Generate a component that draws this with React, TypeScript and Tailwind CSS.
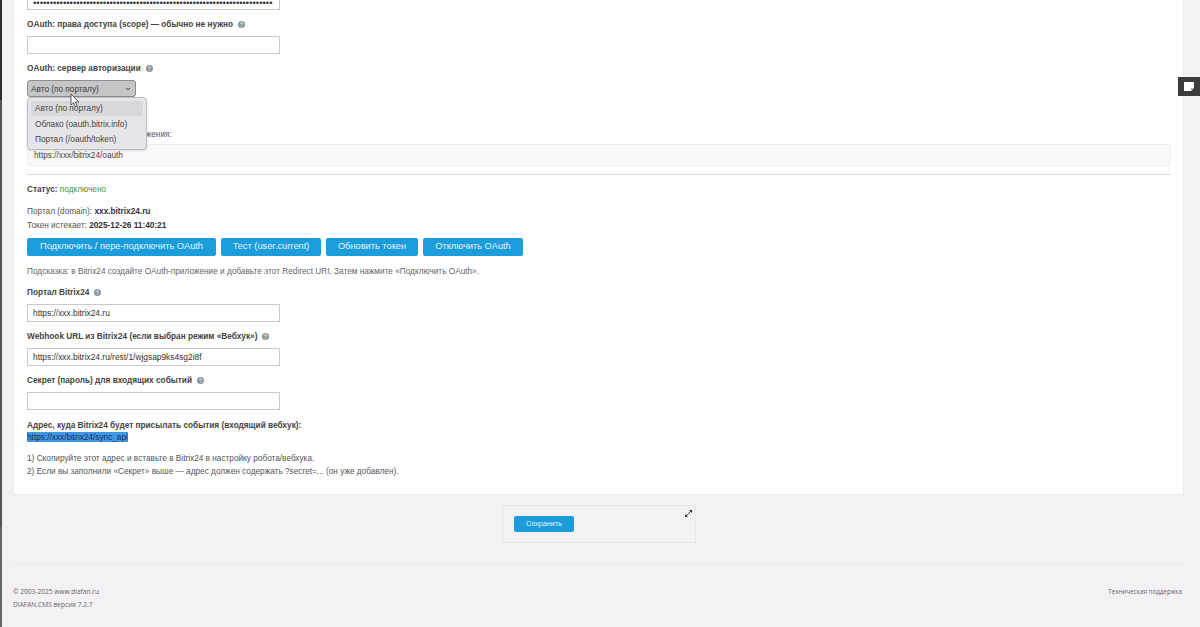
import React from "react";

function Help() {
  return (
    <svg className="ml-[5px] inline-block align-[-1px]" width="7" height="7" viewBox="0 0 8 8">
      <circle cx="4" cy="4" r="4" fill="#8b979c" />
      <path d="M2.8 3.1a1.2 1.2 0 1 1 1.7 1.1c-.4.2-.5.4-.5.8M4 5.9v.7" fill="none" stroke="#fff" strokeWidth="0.9" />
    </svg>
  );
}

function Label({ children, className }: { children: React.ReactNode; className?: string }) {
  return (
    <div className={`h-[12px] text-[8.25px] leading-[14px] font-bold text-[#444] ${className}`}>
      {children}
      <Help />
    </div>
  );
}

function Input({ value, className }: { value?: string; className?: string }) {
  return (
    <div className={`h-[18px] w-[253px] overflow-hidden border border-[#c9c9c9] bg-white px-[5px] text-[8.4px] leading-[16px] whitespace-nowrap text-[#333] ${className}`}>
      {value}
    </div>
  );
}

function Btn({ children, w }: { children: React.ReactNode; w: string }) {
  return (
    <div className={`flex h-[18px] items-center justify-center rounded-[2px] bg-[#1b9ddb] text-[9.25px] text-[#e6f4fb] ${w}`}>
      {children}
    </div>
  );
}

export default function App() {
  return (
    <div className="relative flex h-[627px] w-[1200px] overflow-hidden bg-[#f3f1f3] font-['Liberation_Sans',sans-serif]">
      <div className="flex w-[2px] shrink-0 flex-col">
        <div className="h-[100px] bg-[#2e2e2e]" />
        <div className="h-[427px] bg-[#555]" />
        <div className="flex-1 bg-[#666]" />
      </div>

      <div className="flex w-[1198px] flex-col pl-[11px]">
        {/* main card */}
        <div className="-mt-[10px] h-[505px] w-[1171px] shrink-0 border border-[#ebe9eb] bg-white pl-[13px]">
          <div className="h-[19px] w-[253px] overflow-hidden border border-[#c9c9c9] bg-white pl-[5px] text-[9.5px] leading-[22px] whitespace-nowrap text-[#333]">
            {"•".repeat(72)}
          </div>
          <Label className="mt-[8px]">OAuth: права доступа (scope) — обычно не нужно</Label>
          <Input className="mt-[6px]" />
          <Label className="mt-[8px]">OAuth: сервер авторизации</Label>

          <div className="mt-[6px] flex h-[17px] w-[109px] items-center justify-between rounded-[3px] border border-[#8d8d8d] bg-[#c6c6c8] pt-[3px] pr-[3px] pl-[3px] text-[8.25px] text-[#3a3a3a]">
            <span>Авто (по порталу)</span>
            <svg width="8" height="8" viewBox="0 0 8 8">
              <path d="M2 2l2 2 2-2" fill="none" stroke="#444" strokeWidth="1" />
            </svg>
          </div>

          <div className="mt-[31px] h-[12px] text-[8.25px] leading-[14px] text-[#555]">Redirect URI для вашего приложения:</div>
          <div className="mt-[4px] h-[22px] w-[1144px] rounded-[3px] border border-[#efefef] bg-[#f9f9f9] pl-[6px] text-[8.25px] leading-[22px] text-[#444]">
            https://xxx/bitrix24/oauth
          </div>
          <div className="mt-[8px] h-px w-[1144px] bg-[#d9d9d9]" />

          <div className="mt-[9px] h-[12px] text-[8.25px] leading-[12px] text-[#444]">
            <b>Статус:</b> <span className="text-[#2e9a4e]">подключено</span>
          </div>
          <div className="mt-[10px] h-[12px] text-[8.25px] leading-[12px] text-[#555]">
            Портал (domain): <b className="text-[#333]">xxx.bitrix24.ru</b>
          </div>
          <div className="mt-[2px] h-[12px] text-[8.25px] leading-[12px] text-[#555]">
            Токен истекает: <b className="text-[#333]">2025-12-26 11:40:21</b>
          </div>

          <div className="mt-[6px] flex gap-[5px]">
            <Btn w="w-[189px]">Подключить / пере-подключить OAuth</Btn>
            <Btn w="w-[100px]">Тест (user.current)</Btn>
            <Btn w="w-[92px]">Обновить токен</Btn>
            <Btn w="w-[100px]">Отключить OAuth</Btn>
          </div>

          <div className="mt-[9px] h-[12px] text-[8.25px] leading-[14px] text-[#666]">
            Подсказка: в Bitrix24 создайте OAuth-приложение и добавьте этот Redirect URI. Затем нажмите «Подключить OAuth».
          </div>

          <Label className="mt-[9px]">Портал Bitrix24</Label>
          <Input className="mt-[6px]" value="https://xxx.bitrix24.ru" />
          <Label className="mt-[8px]">Webhook URL из Bitrix24 (если выбран режим «Вебхук»)</Label>
          <Input className="mt-[6px]" value="https://xxx.bitrix24.ru/rest/1/wjgsap9ks4sg2i8f" />
          <Label className="mt-[8px]">Секрет (пароль) для входящих событий</Label>
          <Input className="mt-[6px]" />

          <div className="mt-[9px] h-[12px] text-[8.25px] leading-[14px] font-bold text-[#444]">
            Адрес, куда Bitrix24 будет присылать события (входящий вебхук):
          </div>
          <div className="mt-[1px] h-[10px] w-[101px] bg-[#3f97e8] text-[8.25px] leading-[11px] text-[#1d2f55]">https://xxx/bitrix24/sync_api</div>
          <div className="mt-[11px] h-[12px] text-[8.25px] leading-[12px] text-[#555]">
            1) Скопируйте этот адрес и вставьте в Bitrix24 в настройку робота/вебхука.
          </div>
          <div className="h-[12px] text-[8.25px] leading-[14px] text-[#555]">
            2) Если вы заполнили «Секрет» выше — адрес должен содержать ?secret=... (он уже добавлен).
          </div>
        </div>

        {/* save panel */}
        <div className="mt-[10px] ml-[489px] flex h-[38px] w-[194px] shrink-0 items-center border border-[#e9e7e9] pl-[11px]">
          <div className="flex h-[16px] w-[60px] items-center justify-center rounded-[2px] bg-[#1b9ddb] text-[7.25px] text-[#e6f4fb]">Сохранить</div>
        </div>

        {/* footer */}
        <div className="mt-[21px] h-px w-[1171px] shrink-0 bg-[#ebe9eb]" />
        <div className="mt-[20px] flex w-[1169px] justify-between font-['Open_Sans',sans-serif] text-[6.6px] leading-[13px] text-[#666]">
          <div>
            <div>© 2003-2025 www.diafan.ru</div>
            <div>DIAFAN.CMS версия 7.2.7</div>
          </div>
          <div className="text-[6.25px]">Техническая поддержка</div>
        </div>
      </div>

      {/* open select menu */}
      <div className="absolute top-[97px] left-[27px] flex h-[53px] w-[120px] flex-col rounded-[4px] border border-[#bdbdc0] bg-[#e6e5e9] px-[3px] pt-[3px] text-[8.25px] leading-[14px] text-[#444] shadow-sm">
        <div className="flex h-[15px] items-center rounded-[2px] bg-[#d9d8dd] pt-[1px] pl-[4px]">Авто (по порталу)</div>
        <div className="flex h-[15px] items-center pt-[2px] pl-[4px]">Облако (oauth.bitrix.info)</div>
        <div className="flex h-[15px] items-center pt-[2px] pl-[4px]">Портал (/oauth/token)</div>
      </div>

      {/* mouse cursor */}
      <svg className="absolute top-[93px] left-[70px]" width="11" height="15" viewBox="0 0 11 15">
        <path d="M1 1v11l2.6-2.3 1.8 4 1.8-.8-1.8-3.9h3.4z" fill="#fff" stroke="#333" strokeWidth="0.8" />
      </svg>

      {/* expand icon */}
      <svg className="absolute top-[509px] left-[684px]" width="9" height="9" viewBox="0 0 9 9">
        <path d="M2 7l5-5" stroke="#444" strokeWidth="1" />
        <path d="M5 1h3v3zM1 5v3h3z" fill="#333" />
      </svg>

      {/* floating note button */}
      <div className="absolute top-[77px] left-[1178px] flex h-[19px] w-[22px] items-center justify-center bg-[#3c3c3c]">
        <svg width="10" height="9" viewBox="0 0 10 9">
          <path d="M0 0h10v6L7 9H0z" fill="#fff" />
          <path d="M7 9V6h3z" fill="#b9a49a" />
        </svg>
      </div>
    </div>
  );
}
